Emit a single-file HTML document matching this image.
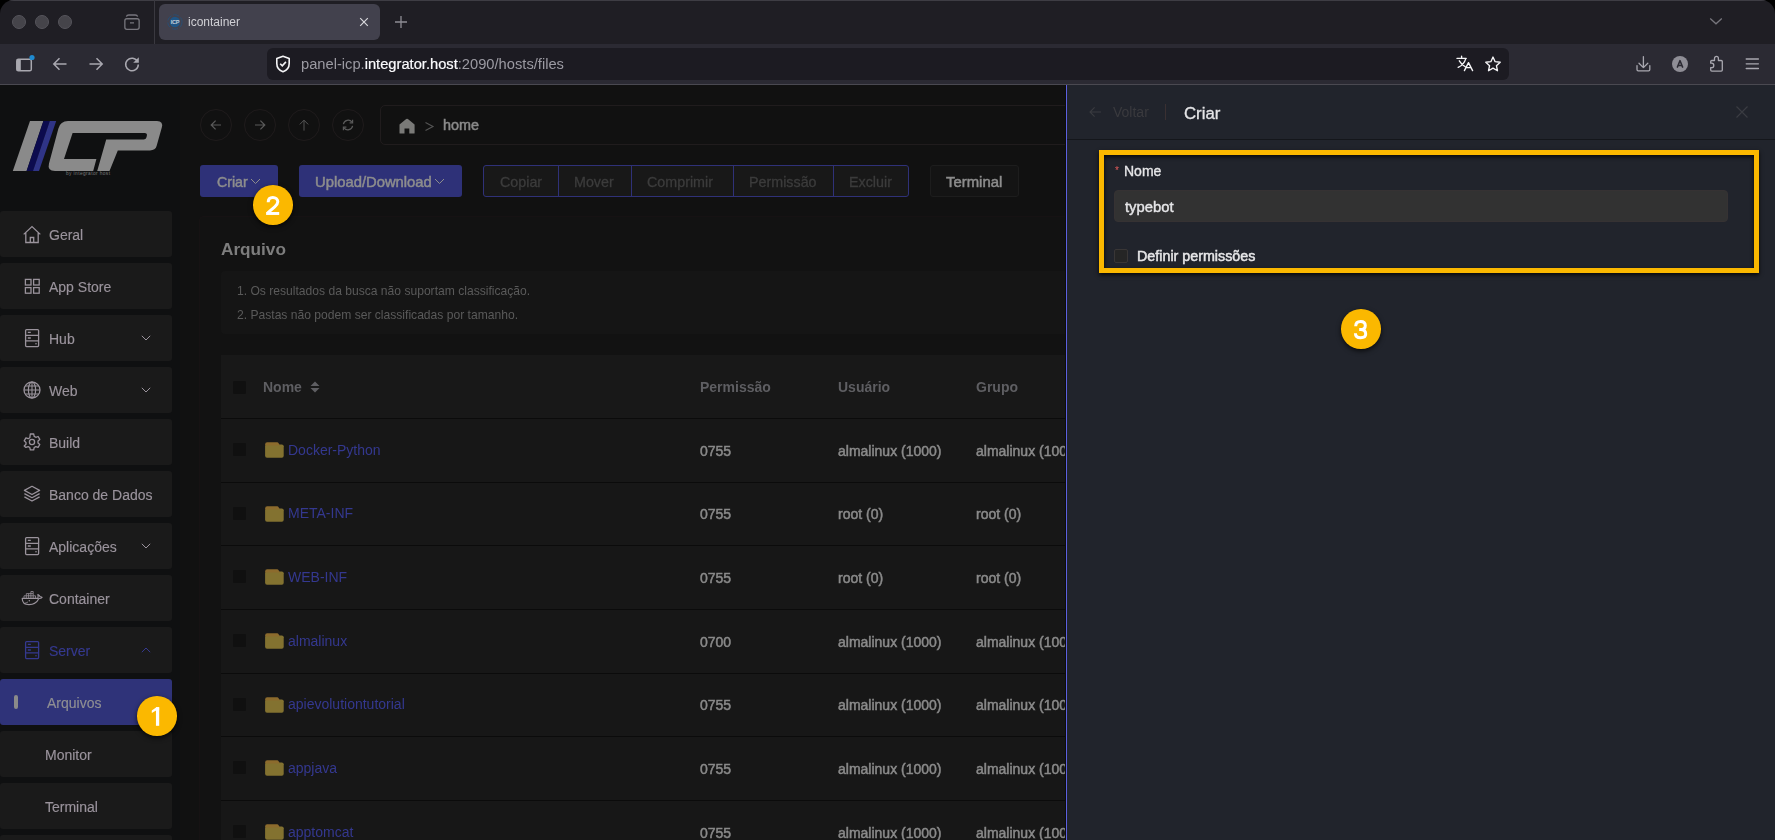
<!DOCTYPE html>
<html><head><meta charset="utf-8">
<style>
*{box-sizing:border-box}
html,body{margin:0;padding:0}
body{width:1775px;height:840px;overflow:hidden;position:relative;background:#000;font-family:"Liberation Sans",sans-serif}
.a{position:absolute}
.t{position:absolute;white-space:nowrap;line-height:1;will-change:transform}
svg{position:absolute;overflow:visible}
</style></head><body>

<!-- ============ BROWSER CHROME ============ -->
<div class="a" id="chrome" style="left:0;top:0;width:1775px;height:85px;background:#1f1e24;border-radius:14px 14px 0 0;overflow:hidden">
  <div class="a" style="left:0;top:0;width:1775px;height:1px;background:#3e3d44"></div>
  <!-- traffic lights -->
  <div class="a" style="left:12px;top:15px;width:14px;height:14px;border-radius:50%;background:#45444a;border:1px solid #55545b"></div>
  <div class="a" style="left:35px;top:15px;width:14px;height:14px;border-radius:50%;background:#45444a;border:1px solid #55545b"></div>
  <div class="a" style="left:58px;top:15px;width:14px;height:14px;border-radius:50%;background:#45444a;border:1px solid #55545b"></div>
  <!-- tabs list icon -->
  <svg style="left:110px;top:5px" width="50" height="35" viewBox="0 0 50 35"><rect x="14.85" y="13.75" width="14.3" height="10.6" rx="2" fill="none" stroke="#77767d" stroke-width="1.3"/><path d="M16.4 11.7Q16.8 10 18.8 10H25.2Q27.2 10 27.6 11.7" fill="none" stroke="#77767d" stroke-width="1.3"/><path d="M20 17.9h4" stroke="#77767d" stroke-width="1.3"/></svg>
  <div class="a" style="left:154px;top:0;width:1px;height:44px;background:#3a3940"></div>
  <!-- tab -->
  <div class="a" style="left:159px;top:4px;width:221px;height:36px;border-radius:6px;background:#42414d"></div>
  <svg style="left:164px;top:10px" width="22" height="24" viewBox="0 0 22 24"><circle cx="10.9" cy="12" r="7.2" fill="none" stroke="#24507a" stroke-width="1" stroke-dasharray="6 2" opacity="0.8"/><circle cx="10.9" cy="12" r="5.2" fill="#1f5585"/><text x="10.9" y="14" text-anchor="middle" font-size="5.6" font-weight="bold" fill="#c4ccd6" font-family="Liberation Sans" letter-spacing="-0.3">ICP</text></svg>
  
  <div class="t" style="left:188px;top:15.6px;font-size:12px;color:#d0d0d5">icontainer</div>
  <svg style="left:358px;top:16px" width="12" height="12" viewBox="0 0 12 12"><path d="M2.2 2.2l7.6 7.6M9.8 2.2l-7.6 7.6" stroke="#d8d8dc" stroke-width="1.2"/></svg>
  <svg style="left:394px;top:15px" width="14" height="14" viewBox="0 0 14 14"><path d="M7 1v12M1 7h12" stroke="#8e8d94" stroke-width="1.3"/></svg>
  <svg style="left:1708px;top:16px" width="16" height="10" viewBox="0 0 16 10"><path d="M2.2 2.4l5.8 5.4 5.8-5.4" fill="none" stroke="#76757c" stroke-width="1.3"/></svg>

  <!-- toolbar -->
  <div class="a" style="left:0;top:44px;width:1775px;height:40px;background:#2b2a33"></div>
  <div class="a" style="left:0;top:84px;width:1775px;height:1px;background:#4a4951"></div>
  <!-- toolbar icons left -->
  <svg style="left:14px;top:55px" width="22" height="18" viewBox="0 0 22 18"><rect x="2.8" y="4.3" width="14.5" height="11.5" rx="1.6" fill="none" stroke="#a9a8b0" stroke-width="1.5"/><rect x="2.8" y="4.3" width="4" height="11.5" fill="#a9a8b0"/><circle cx="18" cy="2.5" r="2.6" fill="#1f8ad0"/></svg>
  <svg style="left:52px;top:56px" width="16" height="16" viewBox="0 0 16 16"><path d="M14.5 8H2M7.5 2.2L1.8 8l5.7 5.8" fill="none" stroke="#a9a8b0" stroke-width="1.5"/></svg>
  <svg style="left:88px;top:56px" width="16" height="16" viewBox="0 0 16 16"><path d="M1.5 8H14M8.5 2.2L14.2 8l-5.7 5.8" fill="none" stroke="#a9a8b0" stroke-width="1.5"/></svg>
  <svg style="left:124px;top:56px" width="16" height="16" viewBox="0 0 16 16"><path d="M13.6 5.6A6.3 6.3 0 1 0 14.3 8.5" fill="none" stroke="#a9a8b0" stroke-width="1.5"/><path d="M14.8 1.2v5.6H9.2z" fill="#a9a8b0"/></svg>
  <!-- url bar -->
  <div class="a" style="left:267px;top:48px;width:1242px;height:32px;border-radius:6px;background:#1c1b22"></div>
  <svg style="left:275px;top:55px" width="16" height="18" viewBox="0 0 16 18"><path d="M8 1.2L14.2 3.6V8.4C14.2 12.4 11.6 15.4 8 16.8 4.4 15.4 1.8 12.4 1.8 8.4V3.6Z" fill="none" stroke="#f4f4f6" stroke-width="1.6" stroke-linejoin="round"/><path d="M5.2 8.8L7.3 10.9 10.9 6.9" fill="none" stroke="#f4f4f6" stroke-width="1.6"/></svg>
  <div class="t" style="left:301px;top:57.3px;font-size:14.7px;color:#9b9aa2">panel-icp.<span style="color:#fbfbfe;-webkit-text-stroke:0.2px currentColor">integrator.host</span>:2090/hosts/files</div>
  <!-- translate -->
  <svg style="left:1452px;top:50px" width="56" height="28" viewBox="0 0 56 28"><path d="M9.6 6.2v2.1M5 8.4h9.2M13.8 8.6C12.6 12.6 10 15.6 6.2 17.4M7.3 10.8C9 13.6 11 15.6 13.6 17" fill="none" stroke="#f6f6f8" stroke-width="1.35" stroke-linecap="round"/><path d="M12.4 20.6L16.5 12.6L20.6 20.6M14 17.6h5" fill="none" stroke="#f6f6f8" stroke-width="1.35" stroke-linecap="round" stroke-linejoin="round"/>
  <path d="M41.00 7.00 L43.12 11.69 L48.23 12.25 L44.42 15.71 L45.47 20.75 L41.00 18.20 L36.53 20.75 L37.58 15.71 L33.77 12.25 L38.88 11.69Z" fill="none" stroke="#f6f6f8" stroke-width="1.35" stroke-linejoin="round"/></svg>
  <!-- right icons -->
  <svg style="left:1630px;top:50px" width="30" height="28" viewBox="0 0 30 28"><path d="M13.4 6.6v11M9 13.2l4.4 4.4 4.4-4.4M7 15.6v4a1.2 1.2 0 0 0 1.2 1.2h10.4a1.2 1.2 0 0 0 1.2-1.2v-4" fill="none" stroke="#a9a8b0" stroke-width="1.3" stroke-linecap="round" stroke-linejoin="round"/></svg>
  <div class="a" style="left:1671.7px;top:56px;width:16px;height:16px;border-radius:50%;background:#8f8e96"></div>
  <svg style="left:1671.7px;top:56px" width="16" height="16" viewBox="0 0 16 16"><path d="M5.2 11.6L8 4.6l2.8 7M6.1 9.4h3.8" fill="none" stroke="#2b2a33" stroke-width="1.5" stroke-linejoin="round"/></svg>
  <svg style="left:1700px;top:50px" width="30" height="28" viewBox="0 0 30 28"><path d="M11.8 21.1H21.2Q22.3 21.1 22.3 20V11.6Q22.3 10.5 21.2 10.5H18.4V8.4A1.95 1.95 0 0 0 14.5 8.4V10.5H11.8Q10.7 10.5 10.7 11.6V13.2H11.6A2.2 2.2 0 0 1 11.6 17.6H10.7V20Q10.7 21.1 11.8 21.1Z" fill="none" stroke="#a9a8b0" stroke-width="1.3" stroke-linejoin="round"/></svg>
  <svg style="left:1744px;top:56px" width="16" height="16" viewBox="0 0 16 16"><path d="M2.2 3h12.2M2.2 7.8h12.2M2.2 12.5h12.2" fill="none" stroke="#a9a8b0" stroke-width="1.3" stroke-linecap="round"/></svg>
</div>

<!-- ============ PAGE ============ -->
<div class="a" id="page" style="left:0;top:85px;width:1775px;height:755px;background:#111111;overflow:hidden">
<div class="a" style="left:200px;top:24px;width:32px;height:32px;border-radius:50%;border:1px solid #1f1b1c"></div>
<svg style="left:209px;top:33px" width="14" height="14" viewBox="0 0 14 14"><path d="M12 7H2.2M6.6 2.6L2.2 7l4.4 4.4" fill="none" stroke="#5a5a5a" stroke-width="1.2"/></svg>
<div class="a" style="left:244px;top:24px;width:32px;height:32px;border-radius:50%;border:1px solid #1f1b1c"></div>
<svg style="left:253px;top:33px" width="14" height="14" viewBox="0 0 14 14"><path d="M2 7h9.8M7.4 2.6L11.8 7l-4.4 4.4" fill="none" stroke="#5a5a5a" stroke-width="1.2"/></svg>
<div class="a" style="left:288px;top:24px;width:32px;height:32px;border-radius:50%;border:1px solid #1f1b1c"></div>
<svg style="left:297px;top:33px" width="14" height="14" viewBox="0 0 14 14"><path d="M7 12.6V2.2M2.8 6.4L7 2.2l4.2 4.2" fill="none" stroke="#5a5a5a" stroke-width="0.95"/></svg>
<div class="a" style="left:332px;top:24px;width:32px;height:32px;border-radius:50%;border:1px solid #1f1b1c"></div>
<svg style="left:341px;top:33px" width="14" height="14" viewBox="0 0 14 14"><path d="M2.4 6.2A4.8 4.8 0 0 1 11 4.2M11.6 7.8A4.8 4.8 0 0 1 3 9.8" fill="none" stroke="#5a5a5a" stroke-width="1.2"/><path d="M11.6 1.8v3H8.6M2.4 12.2v-3h3" fill="none" stroke="#5a5a5a" stroke-width="1.2"/></svg>
<div class="a" style="left:380px;top:20px;width:760px;height:40px;border-radius:5px;border:1px solid #201c1d"></div>
<svg style="left:390px;top:25px" width="34" height="30" viewBox="0 0 34 30"><path d="M9.5 14.6L16.2 9.1Q17.05 8.4 17.9 9.1L24.6 14.6V23.1Q24.6 23.6 24.1 23.6H19.3V18.6H14.5V23.6H10Q9.5 23.6 9.5 23.1Z" fill="#7a7a78"/></svg>
<svg style="left:424px;top:36px" width="11" height="11" viewBox="0 0 11 11"><path d="M1.5 1.5L9 5.5 1.5 9.5" fill="none" stroke="#555" stroke-width="1.1"/></svg>
<div class="t" style="left:442.5px;top:33.00px;font-size:14.4px;color:#8a8a8a;-webkit-text-stroke:0.5px currentColor;">home</div>
<div class="a" style="left:200px;top:80px;width:78px;height:32px;border-radius:3px;background:#2e3178"></div>
<div class="t" style="left:216.5px;top:90.00px;font-size:14.2px;color:#8d8d8d;-webkit-text-stroke:0.5px currentColor;">Criar</div>
<svg style="left:250px;top:93px" width="11" height="7" viewBox="0 0 11 7"><path d="M1 1l4.5 4.5L10 1" fill="none" stroke="#8d8d8d" stroke-width="1"/></svg>
<div class="a" style="left:299px;top:80px;width:163px;height:32px;border-radius:3px;background:#2e3178"></div>
<div class="t" style="left:315px;top:89.60px;font-size:14.8px;color:#8d8d8d;-webkit-text-stroke:0.5px currentColor;">Upload/Download</div>
<svg style="left:434px;top:93px" width="11" height="7" viewBox="0 0 11 7"><path d="M1 1l4.5 4.5L10 1" fill="none" stroke="#8d8d8d" stroke-width="1"/></svg>
<div class="a" style="left:483px;top:80px;width:426px;height:32px;border-radius:3px;background:#181818;border:1px solid #2f3178"></div>
<div class="a" style="left:558px;top:80px;width:1px;height:32px;background:#2f3178"></div>
<div class="a" style="left:631px;top:80px;width:1px;height:32px;background:#2f3178"></div>
<div class="a" style="left:733px;top:80px;width:1px;height:32px;background:#2f3178"></div>
<div class="a" style="left:833px;top:80px;width:1px;height:32px;background:#2f3178"></div>
<div class="t" style="left:499.5px;top:89.90px;font-size:14.3px;color:#3c3c3c;-webkit-text-stroke:0.3px currentColor;">Copiar</div>
<div class="t" style="left:574.4px;top:89.90px;font-size:14.3px;color:#3c3c3c;-webkit-text-stroke:0.3px currentColor;">Mover</div>
<div class="t" style="left:647.3px;top:89.90px;font-size:14.3px;color:#3c3c3c;-webkit-text-stroke:0.3px currentColor;">Comprimir</div>
<div class="t" style="left:748.7px;top:89.90px;font-size:14.3px;color:#3c3c3c;-webkit-text-stroke:0.3px currentColor;">Permissão</div>
<div class="t" style="left:849.3px;top:89.90px;font-size:14.3px;color:#3c3c3c;-webkit-text-stroke:0.3px currentColor;">Excluir</div>
<div class="a" style="left:930px;top:80px;width:89px;height:32px;border-radius:3px;background:#141414;border:1px solid #1d1d1d"></div>
<div class="t" style="left:946.3px;top:89.90px;font-size:14.9px;color:#8d8d8d;-webkit-text-stroke:0.5px currentColor;">Terminal</div>
<div class="a" style="left:199px;top:131px;width:900px;height:700px;border-radius:4px;background:#121212;border:1px solid #161213"></div>
<div class="t" style="left:221px;top:156.00px;font-size:17.2px;color:#7d7d7d;font-weight:bold;">Arquivo</div>
<div class="a" style="left:221px;top:186px;width:860px;height:63px;border-radius:4px;background:#151515"></div>
<div class="t" style="left:237px;top:199.50px;font-size:12.1px;color:#5a5a5a;">1. Os resultados da busca não suportam classificação.</div>
<div class="t" style="left:237px;top:223.50px;font-size:12.1px;color:#5a5a5a;">2. Pastas não podem ser classificadas por tamanho.</div>
<div class="a" style="left:221px;top:270px;width:860px;height:500px;background:#171717"></div>
<div class="a" style="left:221px;top:270px;width:860px;height:63px;background:#181818"></div>
<div class="a" style="left:233px;top:296px;width:13px;height:13px;background:#101010;border-radius:1px"></div>
<div class="t" style="left:263px;top:294.80px;font-size:14px;color:#5e5e62;font-weight:bold;">Nome</div>
<svg style="left:309px;top:295px" width="12" height="14" viewBox="0 0 12 14"><path d="M6 1.5L10.5 6h-9zM6 12.5L10.5 8h-9z" fill="#5e5e62"/></svg>
<div class="t" style="left:700px;top:294.80px;font-size:14px;color:#5e5e62;font-weight:bold;">Permissão</div>
<div class="t" style="left:838px;top:294.80px;font-size:14px;color:#5e5e62;font-weight:bold;">Usuário</div>
<div class="t" style="left:976px;top:294.80px;font-size:14px;color:#5e5e62;font-weight:bold;">Grupo</div>
<div class="a" style="left:221px;top:333.0px;width:860px;height:1px;background:#0b0b0b"></div>
<div class="a" style="left:233px;top:358.0px;width:13px;height:13px;background:#101010;border-radius:1px"></div>
<svg style="left:265px;top:356.8px" width="19" height="16" viewBox="0 0 19 16"><rect x="0.1" y="2.4" width="18.6" height="13.3" rx="1.9" fill="#837230"/><path d="M0.1 3.4V2.6Q0.1 0.3 2.2 0.3H12.2Q13 0.3 13.5 1L14.8 3.4Z" fill="#8c6b2d"/></svg>
<div class="t" style="left:288px;top:357.80px;font-size:14px;color:#34388f;">Docker-Python</div>
<div class="t" style="left:700px;top:358.60px;font-size:14px;color:#8a8a8a;-webkit-text-stroke:0.5px currentColor;">0755</div>
<div class="t" style="left:838px;top:358.60px;font-size:14px;color:#8a8a8a;-webkit-text-stroke:0.5px currentColor;">almalinux (1000)</div>
<div class="t" style="left:976px;top:358.60px;font-size:14px;color:#8a8a8a;-webkit-text-stroke:0.5px currentColor;">almalinux (1000)</div>
<div class="a" style="left:221px;top:396.7px;width:860px;height:1px;background:#0b0b0b"></div>
<div class="a" style="left:233px;top:421.7px;width:13px;height:13px;background:#101010;border-radius:1px"></div>
<svg style="left:265px;top:420.5px" width="19" height="16" viewBox="0 0 19 16"><rect x="0.1" y="2.4" width="18.6" height="13.3" rx="1.9" fill="#837230"/><path d="M0.1 3.4V2.6Q0.1 0.3 2.2 0.3H12.2Q13 0.3 13.5 1L14.8 3.4Z" fill="#8c6b2d"/></svg>
<div class="t" style="left:288px;top:421.47px;font-size:14px;color:#34388f;">META-INF</div>
<div class="t" style="left:700px;top:422.27px;font-size:14px;color:#8a8a8a;-webkit-text-stroke:0.5px currentColor;">0755</div>
<div class="t" style="left:838px;top:422.27px;font-size:14px;color:#8a8a8a;-webkit-text-stroke:0.5px currentColor;">root (0)</div>
<div class="t" style="left:976px;top:422.27px;font-size:14px;color:#8a8a8a;-webkit-text-stroke:0.5px currentColor;">root (0)</div>
<div class="a" style="left:221px;top:460.3px;width:860px;height:1px;background:#0b0b0b"></div>
<div class="a" style="left:233px;top:485.3px;width:13px;height:13px;background:#101010;border-radius:1px"></div>
<svg style="left:265px;top:484.1px" width="19" height="16" viewBox="0 0 19 16"><rect x="0.1" y="2.4" width="18.6" height="13.3" rx="1.9" fill="#837230"/><path d="M0.1 3.4V2.6Q0.1 0.3 2.2 0.3H12.2Q13 0.3 13.5 1L14.8 3.4Z" fill="#8c6b2d"/></svg>
<div class="t" style="left:288px;top:485.14px;font-size:14px;color:#34388f;">WEB-INF</div>
<div class="t" style="left:700px;top:485.94px;font-size:14px;color:#8a8a8a;-webkit-text-stroke:0.5px currentColor;">0755</div>
<div class="t" style="left:838px;top:485.94px;font-size:14px;color:#8a8a8a;-webkit-text-stroke:0.5px currentColor;">root (0)</div>
<div class="t" style="left:976px;top:485.94px;font-size:14px;color:#8a8a8a;-webkit-text-stroke:0.5px currentColor;">root (0)</div>
<div class="a" style="left:221px;top:524.0px;width:860px;height:1px;background:#0b0b0b"></div>
<div class="a" style="left:233px;top:549.0px;width:13px;height:13px;background:#101010;border-radius:1px"></div>
<svg style="left:265px;top:547.8px" width="19" height="16" viewBox="0 0 19 16"><rect x="0.1" y="2.4" width="18.6" height="13.3" rx="1.9" fill="#837230"/><path d="M0.1 3.4V2.6Q0.1 0.3 2.2 0.3H12.2Q13 0.3 13.5 1L14.8 3.4Z" fill="#8c6b2d"/></svg>
<div class="t" style="left:288px;top:548.81px;font-size:14px;color:#34388f;">almalinux</div>
<div class="t" style="left:700px;top:549.61px;font-size:14px;color:#8a8a8a;-webkit-text-stroke:0.5px currentColor;">0700</div>
<div class="t" style="left:838px;top:549.61px;font-size:14px;color:#8a8a8a;-webkit-text-stroke:0.5px currentColor;">almalinux (1000)</div>
<div class="t" style="left:976px;top:549.61px;font-size:14px;color:#8a8a8a;-webkit-text-stroke:0.5px currentColor;">almalinux (1000)</div>
<div class="a" style="left:221px;top:587.7px;width:860px;height:1px;background:#0b0b0b"></div>
<div class="a" style="left:233px;top:612.7px;width:13px;height:13px;background:#101010;border-radius:1px"></div>
<svg style="left:265px;top:611.5px" width="19" height="16" viewBox="0 0 19 16"><rect x="0.1" y="2.4" width="18.6" height="13.3" rx="1.9" fill="#837230"/><path d="M0.1 3.4V2.6Q0.1 0.3 2.2 0.3H12.2Q13 0.3 13.5 1L14.8 3.4Z" fill="#8c6b2d"/></svg>
<div class="t" style="left:288px;top:612.48px;font-size:14px;color:#34388f;">apievolutiontutorial</div>
<div class="t" style="left:700px;top:613.28px;font-size:14px;color:#8a8a8a;-webkit-text-stroke:0.5px currentColor;">0755</div>
<div class="t" style="left:838px;top:613.28px;font-size:14px;color:#8a8a8a;-webkit-text-stroke:0.5px currentColor;">almalinux (1000)</div>
<div class="t" style="left:976px;top:613.28px;font-size:14px;color:#8a8a8a;-webkit-text-stroke:0.5px currentColor;">almalinux (1000)</div>
<div class="a" style="left:221px;top:651.4px;width:860px;height:1px;background:#0b0b0b"></div>
<div class="a" style="left:233px;top:676.4px;width:13px;height:13px;background:#101010;border-radius:1px"></div>
<svg style="left:265px;top:675.1px" width="19" height="16" viewBox="0 0 19 16"><rect x="0.1" y="2.4" width="18.6" height="13.3" rx="1.9" fill="#837230"/><path d="M0.1 3.4V2.6Q0.1 0.3 2.2 0.3H12.2Q13 0.3 13.5 1L14.8 3.4Z" fill="#8c6b2d"/></svg>
<div class="t" style="left:288px;top:676.15px;font-size:14px;color:#34388f;">appjava</div>
<div class="t" style="left:700px;top:676.95px;font-size:14px;color:#8a8a8a;-webkit-text-stroke:0.5px currentColor;">0755</div>
<div class="t" style="left:838px;top:676.95px;font-size:14px;color:#8a8a8a;-webkit-text-stroke:0.5px currentColor;">almalinux (1000)</div>
<div class="t" style="left:976px;top:676.95px;font-size:14px;color:#8a8a8a;-webkit-text-stroke:0.5px currentColor;">almalinux (1000)</div>
<div class="a" style="left:221px;top:715.0px;width:860px;height:1px;background:#0b0b0b"></div>
<div class="a" style="left:233px;top:740.0px;width:13px;height:13px;background:#101010;border-radius:1px"></div>
<svg style="left:265px;top:738.8px" width="19" height="16" viewBox="0 0 19 16"><rect x="0.1" y="2.4" width="18.6" height="13.3" rx="1.9" fill="#837230"/><path d="M0.1 3.4V2.6Q0.1 0.3 2.2 0.3H12.2Q13 0.3 13.5 1L14.8 3.4Z" fill="#8c6b2d"/></svg>
<div class="t" style="left:288px;top:739.82px;font-size:14px;color:#34388f;">apptomcat</div>
<div class="t" style="left:700px;top:740.62px;font-size:14px;color:#8a8a8a;-webkit-text-stroke:0.5px currentColor;">0755</div>
<div class="t" style="left:838px;top:740.62px;font-size:14px;color:#8a8a8a;-webkit-text-stroke:0.5px currentColor;">almalinux (1000)</div>
<div class="t" style="left:976px;top:740.62px;font-size:14px;color:#8a8a8a;-webkit-text-stroke:0.5px currentColor;">almalinux (1000)</div>
<div class="a" style="left:0;top:0;width:180px;height:755px;background:#0f1011"></div>
<svg style="left:0;top:0" width="179" height="120" viewBox="0 85 179 120">
<path d="M30 121h13.4L26.6 171H12.8z" fill="#8a8a8a"/>
<path d="M43.4 121h6.4L33 171h-6.4z" fill="#0c0b4e"/>
<path d="M49.8 121h6.4L39 171h-6z" fill="#2f3486"/>
<path d="M68 121H157Q163.5 121 161.8 127.5L156.6 146Q155.4 150.4 150 150.4H117.8L109.5 171H55Q47 171 49 163.5L58.4 128.5Q60.4 121 68 121z" fill="#8a8a8a"/>
<path d="M72.6 133H144.5Q147.6 133 146.8 136L146.4 137.6Q145.9 139.5 143.6 139.5H106.2L97.2 171H93.2L96.4 159H64z" fill="#0f1011"/>
<text x="66" y="175.3" font-size="4.8" textLength="44" fill="#7a7a7a" font-family="Liberation Sans">by integrator host</text>
</svg>
<div class="a" style="left:0;top:126px;width:172px;height:46px;border-radius:3px;background:#1a1a1a"></div>
<svg style="left:23px;top:140px" width="18" height="18" viewBox="0 0 18 18"><path d="M0.7 9.4L9 1.6l8.3 7.8M2.8 7.6V17.5h12.4V7.6M7.3 17.5v-5h3.4v5" fill="none" stroke="#9a939c" stroke-width="1.3"/></svg>
<div class="t" style="left:49px;top:143px;font-size:14px;color:#9a939c;-webkit-text-stroke:0.15px currentColor;">Geral</div>
<div class="a" style="left:0;top:178px;width:172px;height:46px;border-radius:3px;background:#1a1a1a"></div>
<svg style="left:23px;top:192px" width="18" height="18" viewBox="0 0 18 18"><rect x="2.4" y="2.4" width="5.6" height="5.6" fill="none" stroke="#9a939c" stroke-width="1.3"/><rect x="10.6" y="2.4" width="5.6" height="5.6" fill="none" stroke="#9a939c" stroke-width="1.3"/><rect x="2.4" y="10.6" width="5.6" height="5.6" fill="none" stroke="#9a939c" stroke-width="1.3"/><rect x="10.6" y="10.6" width="5.6" height="5.6" fill="none" stroke="#9a939c" stroke-width="1.3"/></svg>
<div class="t" style="left:49px;top:195px;font-size:14px;color:#9a939c;-webkit-text-stroke:0.15px currentColor;">App Store</div>
<div class="a" style="left:0;top:230px;width:172px;height:46px;border-radius:3px;background:#1a1a1a"></div>
<svg style="left:23px;top:244px" width="18" height="18" viewBox="0 0 18 18"><rect x="2.6" y="0.6" width="13" height="17" rx="1" fill="none" stroke="#9a939c" stroke-width="1.3"/><path d="M2.6 6.3h13M2.6 11.9h13M4.8 3.4h3M4.8 9h3" stroke="#9a939c" stroke-width="1.3"/><circle cx="13" cy="14.8" r="0.8" fill="#9a939c"/></svg>
<div class="t" style="left:49px;top:247px;font-size:14px;color:#9a939c;-webkit-text-stroke:0.15px currentColor;">Hub</div>
<svg style="left:141px;top:250px" width="10" height="6" viewBox="0 0 10 6"><path d="M0.8 0.8L5 5 9.2 0.8" fill="none" stroke="#9a939c" stroke-width="1"/></svg>
<div class="a" style="left:0;top:282px;width:172px;height:46px;border-radius:3px;background:#1a1a1a"></div>
<svg style="left:23px;top:296px" width="18" height="18" viewBox="0 0 18 18"><circle cx="9" cy="9" r="8" fill="none" stroke="#9a939c" stroke-width="1.3"/><ellipse cx="9" cy="9" rx="3.6" ry="8" fill="none" stroke="#9a939c" stroke-width="1.2"/><path d="M9 1v16M1 9h16M2.2 5h13.6M2.2 13h13.6" stroke="#9a939c" stroke-width="1.1"/></svg>
<div class="t" style="left:49px;top:299px;font-size:14px;color:#9a939c;-webkit-text-stroke:0.15px currentColor;">Web</div>
<svg style="left:141px;top:302px" width="10" height="6" viewBox="0 0 10 6"><path d="M0.8 0.8L5 5 9.2 0.8" fill="none" stroke="#9a939c" stroke-width="1"/></svg>
<div class="a" style="left:0;top:334px;width:172px;height:46px;border-radius:3px;background:#1a1a1a"></div>
<svg style="left:23px;top:348px" width="18" height="18" viewBox="0 0 18 18"><path d="M7.3 1h3.4l.5 2.4 1.6.9 2.3-.8 1.7 2.9-1.8 1.6v1.9l1.8 1.6-1.7 2.9-2.3-.8-1.6.9-.5 2.4H7.3l-.5-2.4-1.6-.9-2.3.8L1.2 12.9 3 11.3V9.4L1.2 7.8 2.9 4.9l2.3.8 1.6-.9z" fill="none" stroke="#9a939c" stroke-width="1.3" stroke-linejoin="round"/><circle cx="9" cy="9" r="2.6" fill="none" stroke="#9a939c" stroke-width="1.3"/></svg>
<div class="t" style="left:49px;top:351px;font-size:14px;color:#9a939c;-webkit-text-stroke:0.15px currentColor;">Build</div>
<div class="a" style="left:0;top:386px;width:172px;height:46px;border-radius:3px;background:#1a1a1a"></div>
<svg style="left:23px;top:400px" width="18" height="18" viewBox="0 0 18 18"><path d="M9 1.3l7.6 4.1L9 9.5 1.4 5.4z" fill="none" stroke="#9a939c" stroke-width="1.3" stroke-linejoin="round"/><path d="M1.4 8.6L9 12.7l7.6-4.1M1.4 11.9L9 16l7.6-4.1" fill="none" stroke="#9a939c" stroke-width="1.3" stroke-linejoin="round"/></svg>
<div class="t" style="left:49px;top:403px;font-size:14px;color:#9a939c;-webkit-text-stroke:0.15px currentColor;">Banco de Dados</div>
<div class="a" style="left:0;top:438px;width:172px;height:46px;border-radius:3px;background:#1a1a1a"></div>
<svg style="left:23px;top:452px" width="18" height="18" viewBox="0 0 18 18"><rect x="2.6" y="0.6" width="13" height="17" rx="1" fill="none" stroke="#9a939c" stroke-width="1.3"/><path d="M2.6 6.3h13M2.6 11.9h13M4.8 3.4h3M4.8 9h3" stroke="#9a939c" stroke-width="1.3"/><circle cx="13" cy="14.8" r="0.8" fill="#9a939c"/></svg>
<div class="t" style="left:49px;top:455px;font-size:14px;color:#9a939c;-webkit-text-stroke:0.15px currentColor;">Aplicações</div>
<svg style="left:141px;top:458px" width="10" height="6" viewBox="0 0 10 6"><path d="M0.8 0.8L5 5 9.2 0.8" fill="none" stroke="#9a939c" stroke-width="1"/></svg>
<div class="a" style="left:0;top:490px;width:172px;height:46px;border-radius:3px;background:#1a1a1a"></div>
<svg style="left:15px;top:500px" width="45" height="30" viewBox="0 0 45 30"><path d="M7.2 13.4H22.6C23.3 12.4 23.3 11.1 22.9 9.5C24.2 10.1 24.9 10.9 25.1 11.8C25.9 11.6 26.7 11.9 27.1 12.4C26.3 13.3 25.1 13.6 23.9 13.5C21.9 17.6 18.2 19.6 14 19.6C10 19.6 7.3 17.4 7.2 13.4Z" fill="none" stroke="#9a939c" stroke-width="1.15" stroke-linejoin="round"/><path d="M9 13.2V10.8H20.5V13.2M11.3 10.8V8.6H18.2V10.8M15.9 8.6V6.5H18.2V8.6M11.3 13.2V10.8M13.6 13.2V8.6M15.9 13.2V8.6M18.2 13.2V10.8" fill="none" stroke="#9a939c" stroke-width="0.8"/><circle cx="14.3" cy="15.7" r="0.75" fill="#9a939c"/><path d="M10.2 18.1Q11.7 17.8 12.9 17" fill="none" stroke="#9a939c" stroke-width="0.9"/></svg>
<div class="t" style="left:49px;top:507px;font-size:14px;color:#9a939c;-webkit-text-stroke:0.15px currentColor;">Container</div>
<div class="a" style="left:0;top:542px;width:172px;height:46px;border-radius:3px;background:#1a1a1a"></div>
<svg style="left:23px;top:556px" width="18" height="18" viewBox="0 0 18 18"><rect x="2.6" y="0.6" width="13" height="17" rx="1" fill="none" stroke="#35398f" stroke-width="1.3"/><path d="M2.6 6.3h13M2.6 11.9h13M4.8 3.4h3M4.8 9h3" stroke="#35398f" stroke-width="1.3"/><circle cx="13" cy="14.8" r="0.8" fill="#35398f"/></svg>
<div class="t" style="left:49px;top:559px;font-size:14px;color:#35398f;-webkit-text-stroke:0.15px currentColor;">Server</div>
<svg style="left:141px;top:562px" width="10" height="6" viewBox="0 0 10 6"><path d="M0.8 5.2L5 1 9.2 5.2" fill="none" stroke="#35398f" stroke-width="1"/></svg>
<div class="a" style="left:0;top:594px;width:172px;height:46px;border-radius:3px;background:#2f3379"></div>
<div class="a" style="left:14px;top:610px;width:4px;height:14px;border-radius:2px;background:#8a8a8a"></div>
<div class="t" style="left:47px;top:611px;font-size:14px;color:#8f8f93;-webkit-text-stroke:0.15px currentColor;">Arquivos</div>
<div class="a" style="left:0;top:646px;width:172px;height:46px;border-radius:3px;background:#1a1a1a"></div>
<div class="t" style="left:45px;top:663px;font-size:14px;color:#9a939c;-webkit-text-stroke:0.15px currentColor;">Monitor</div>
<div class="a" style="left:0;top:698px;width:172px;height:46px;border-radius:3px;background:#1a1a1a"></div>
<div class="t" style="left:45px;top:715px;font-size:14px;color:#9a939c;-webkit-text-stroke:0.15px currentColor;">Terminal</div>
<div class="a" style="left:0;top:750px;width:172px;height:46px;border-radius:3px;background:#1a1a1a"></div>
<div class="a" style="left:1066px;top:0;width:709px;height:755px;background:#21242c"></div>
<div class="a" style="left:1065px;top:0;width:1px;height:755px;background:#0d0d0a"></div>
<div class="a" style="left:1066px;top:0;width:1.25px;height:755px;background:#5c60e0"></div>
<div class="a" style="left:1067px;top:54px;width:708px;height:1px;background:#14161b"></div>
<svg style="left:1088px;top:20px" width="14" height="14" viewBox="0 0 14 14"><path d="M13 7H2M6.6 2.4L2 7l4.6 4.6" fill="none" stroke="#3a3b40" stroke-width="1.1"/></svg>
<div class="t" style="left:1112.5px;top:20.20px;font-size:14px;color:#3a3a3e;">Voltar</div>
<div class="a" style="left:1165px;top:19px;width:1px;height:16px;background:#3a3032"></div>
<div class="t" style="left:1183.5px;top:20.50px;font-size:16.8px;color:#e6e6e8;-webkit-text-stroke:0.3px currentColor;">Criar</div>
<svg style="left:1735px;top:20px" width="14" height="14" viewBox="0 0 14 14"><path d="M1.5 1.5l11 11M12.5 1.5l-11 11" stroke="#3a3c42" stroke-width="1.2"/></svg>
<div class="t" style="left:1114.5px;top:81.00px;font-size:10px;color:#e05a5a;">*</div>
<div class="t" style="left:1123.5px;top:79.00px;font-size:14px;color:#e6e6e8;-webkit-text-stroke:0.35px currentColor;">Nome</div>
<div class="a" style="left:1114px;top:105px;width:614px;height:32px;border-radius:4px;background:#323232;border:1px solid #363233"></div>
<div class="t" style="left:1125px;top:114.80px;font-size:14.8px;color:#e6e6e8;-webkit-text-stroke:0.4px currentColor;">typebot</div>
<div class="a" style="left:1114px;top:164px;width:14px;height:14px;border-radius:2px;background:#252525;border:1px solid #393636"></div>
<div class="t" style="left:1136.8px;top:163.60px;font-size:14.3px;color:#e6e6e8;-webkit-text-stroke:0.5px currentColor;">Definir permissões</div>
<div class="a" style="left:1099px;top:65px;width:660px;height:123px;border:5px solid #fbb800;box-shadow:0 2px 4px rgba(0,0,0,.8), inset 0 2px 4px rgba(0,0,0,.8)"></div>
<div class="a" style="left:137.2px;top:611.2px;width:39.6px;height:39.6px;border-radius:50%;background:#fbb800;box-shadow:0 2px 5px rgba(0,0,0,.7)"></div>
<svg style="left:137px;top:611px" width="40" height="40" viewBox="0 0 40 40"><rect x="18.95" y="11.2" width="3.25" height="18.6" fill="#fff"/><path d="M19.4 11.2H22.15V14.6H19.05L14.8 17.1V14.5Z" fill="#fff"/></svg>
<div class="a" style="left:253.2px;top:100.2px;width:39.6px;height:39.6px;border-radius:50%;background:#fbb800;box-shadow:0 2px 5px rgba(0,0,0,.7)"></div>
<svg style="left:253px;top:100px" width="40" height="40" viewBox="0 0 40 40"><path d="M15.2 17.3C15.2 14 17.2 12.4 19.8 12.4C22.6 12.4 24.8 14.2 24.8 16.8C24.8 18.8 23.7 20.1 21.7 21.8L14.7 27.9" fill="none" stroke="#fff" stroke-width="3"/><rect x="13.1" y="27" width="13.1" height="2.95" fill="#fff"/></svg>
<div class="a" style="left:1341.2px;top:224.2px;width:39.6px;height:39.6px;border-radius:50%;background:#fbb800;box-shadow:0 2px 5px rgba(0,0,0,.7)"></div>
<svg style="left:1341px;top:224px" width="40" height="40" viewBox="0 0 40 40"><path d="M14.7 17.3C14.7 14 16.8 12.4 19.6 12.4C22.4 12.4 24.3 14 24.3 16.5C24.3 19 22.4 20.6 19.6 20.6H18.2M19.6 20.6C22.8 20.6 24.7 22.4 24.7 25.1C24.7 27.8 22.5 28.8 19.6 28.8C16.5 28.8 14.4 27.3 14.4 24.3" fill="none" stroke="#fff" stroke-width="3"/></svg>
</div>
</body></html>
